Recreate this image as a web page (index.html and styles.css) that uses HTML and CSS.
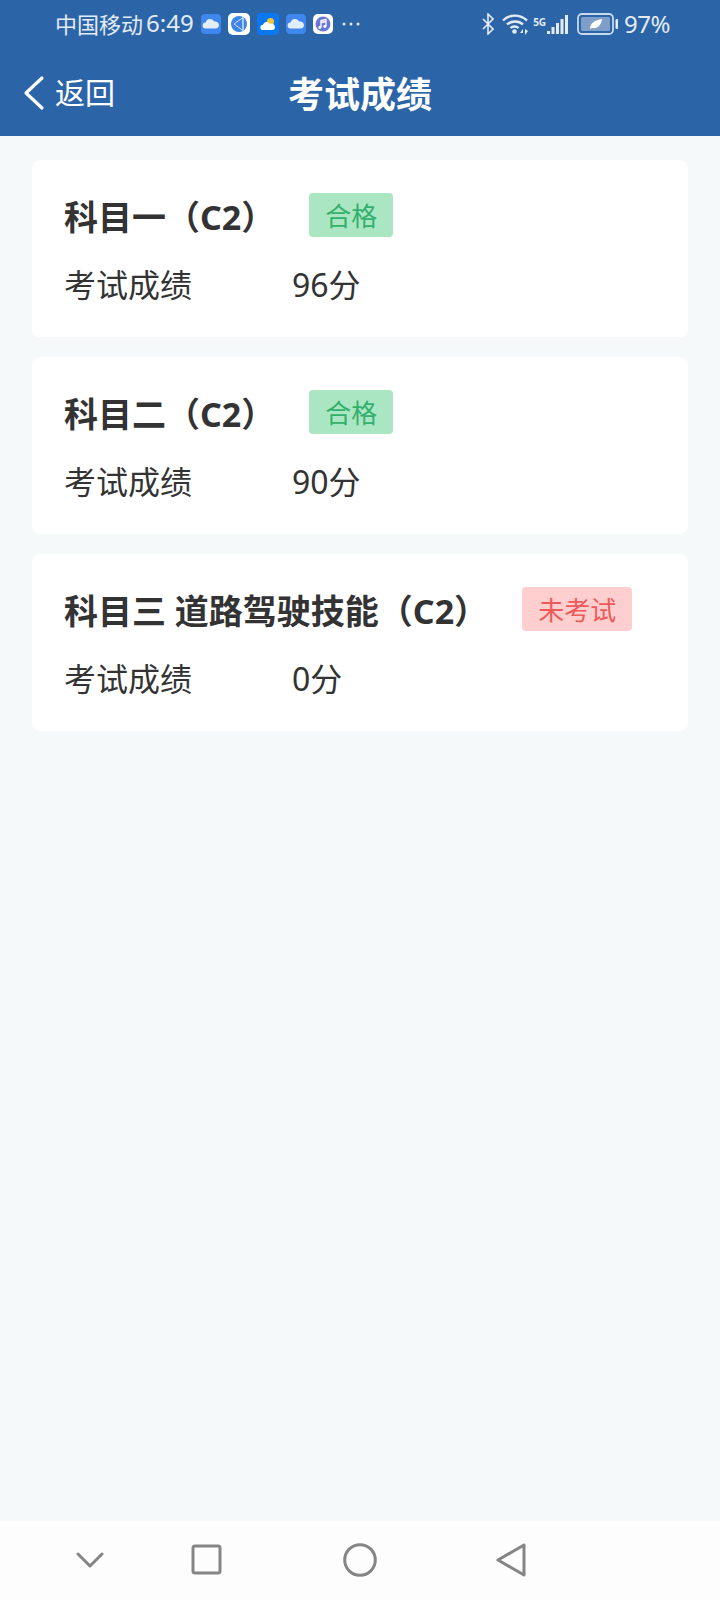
FILE: index.html
```html
<!DOCTYPE html>
<html lang="zh-CN">
<head>
  <meta charset="UTF-8">
  <meta name="viewport" content="width=device-width, initial-scale=1.0">
  <title>考试成绩</title>
  <link rel="stylesheet" href="styles.css">
</head>
<body>
  <div class="page">
    <header class="top">
      <div class="status">
        <span class="carrier">中国移动</span>
        <span class="clock">6:49</span>
        <div class="apps">
          <svg class="app" width="20" height="20" viewBox="0 0 20 20"><rect width="20" height="20" rx="4" fill="#3f86ee"/><path d="M4.500 14.500a3 3 0 0 1 .2-6 4.600 4.600 0 0 1 8.600-.9 3.500 3.500 0 0 1 2 6.900z" fill="#e4edfb"/></svg>
          <svg class="app" width="22" height="22" viewBox="0 0 22 22"><rect width="22" height="22" rx="5" fill="#fff"/><circle cx="11" cy="11" r="8" fill="#3d86e8"/><path d="M15 4.500 6 11l9 6.500zM15 4.500V17.500" fill="none" stroke="#cfe0f8" stroke-width="1"/></svg>
          <svg class="app" width="22" height="22" viewBox="0 0 22 22"><rect width="22" height="22" rx="4" fill="#0a78f0"/><circle cx="13.500" cy="8.500" r="3.500" fill="#f7c531"/><path d="M6 17a2.600 2.600 0 0 1 0-5.200 3.800 3.800 0 0 1 7-.8 3 3 0 0 1 3 6z" fill="#fff"/></svg>
          <svg class="app" width="20" height="20" viewBox="0 0 20 20"><rect width="20" height="20" rx="4" fill="#3f86ee"/><path d="M4.500 14.500a3 3 0 0 1 .2-6 4.600 4.600 0 0 1 8.600-.9 3.500 3.500 0 0 1 2 6.900z" fill="#e4edfb"/></svg>
          <svg class="app" width="20" height="20" viewBox="0 0 20 20"><rect width="20" height="20" rx="5" fill="#fff"/><circle cx="10" cy="10" r="7.500" fill="#6a78dc"/><path d="M8 13.500V6.500l5-1v7M8 8.500l5-1" fill="none" stroke="#fff" stroke-width="1.300"/><circle cx="6.800" cy="13.500" r="1.400" fill="#fff"/><circle cx="11.800" cy="12.500" r="1.400" fill="#fff"/></svg>
          <svg class="more" width="18" height="4" viewBox="0 0 18 4"><circle cx="2" cy="2" r="1.500"/><circle cx="9" cy="2" r="1.500"/><circle cx="16" cy="2" r="1.500"/></svg>
        </div>
        <div class="sys">
          <svg width="12" height="22" viewBox="0 0 12 22" fill="none" stroke="#e3ebf6" stroke-width="1.600"><path d="M1 6l10 10-5 5V1l5 5L1 16"/></svg>
          <svg class="wifi" width="27" height="22" viewBox="0 0 27 22" fill="none" stroke="#e3ebf6" stroke-width="2.400"><path d="M1 7.500c6.500-6.500 17-6.500 24 0M5 11.500c4-4 12-4 16 0M8.500 15c2-2 6-2 8 0"/><circle cx="12.500" cy="18.500" r="2.300" fill="#e3ebf6" stroke="none"/><path d="M21 16l-3 4h3zM23 16v6l3-4z" fill="#e3ebf6" stroke="none"/></svg>
          <span class="net">5G</span>
          <svg class="bars" width="21" height="21" viewBox="0 0 21 21" fill="#e3ebf6"><rect x="0" y="17" width="3" height="3"/><rect x="4.500" y="13" width="3" height="7"/><rect x="9" y="9" width="3" height="11"/><rect x="13.500" y="5" width="3" height="15"/><rect x="18" y="1" width="3" height="19"/></svg>
          <svg class="batt" width="41" height="22" viewBox="0 0 41 22"><rect x="1" y="1" width="35" height="20" rx="4" fill="none" stroke="#c9d8ec" stroke-width="1.800"/><rect x="4" y="4" width="29" height="14" rx="1.500" fill="#7f9fca"/><path d="M13 16c0-6 5-9 12-10-1 7-5 10-10 9z" fill="#fff"/><rect x="38.500" y="6" width="2.500" height="10" rx="1" fill="#e3ebf6"/></svg>
          <span class="pct">97%</span>
        </div>
      </div>
      <nav class="bar">
        <a class="back">
          <svg class="arrow" width="22" height="36" viewBox="0 0 22 36" fill="none" stroke="#fff" stroke-width="3.200" stroke-linecap="round" stroke-linejoin="round"><path d="M19 3 3 18l16 15"/></svg>
          <span>返回</span>
        </a>
        <h1>考试成绩</h1>
      </nav>
    </header>

    <main class="list">
      <section class="card">
        <div class="head">
          <h2>科目一（C2）</h2>
          <span class="tag ok">合格</span>
        </div>
        <div class="row"><span class="label">考试成绩</span><span>96分</span></div>
      </section>
      <section class="card">
        <div class="head">
          <h2>科目二（C2）</h2>
          <span class="tag ok">合格</span>
        </div>
        <div class="row"><span class="label">考试成绩</span><span>90分</span></div>
      </section>
      <section class="card">
        <div class="head">
          <h2>科目三 道路驾驶技能（C2）</h2>
          <span class="tag no">未考试</span>
        </div>
        <div class="row"><span class="label">考试成绩</span><span>0分</span></div>
      </section>
    </main>

    <footer class="keys">
      <svg class="k1" width="28" height="16" viewBox="0 0 28 16" fill="none" stroke="#858585" stroke-width="3" stroke-linecap="round" stroke-linejoin="round"><path d="M2 2l12 12L26 2"/></svg>
      <svg class="k2" width="32" height="32" viewBox="0 0 32 32" fill="none" stroke="#858585" stroke-width="3"><rect x="2" y="2" width="27" height="27" rx="2"/></svg>
      <svg class="k3" width="34" height="34" viewBox="0 0 34 34" fill="none" stroke="#858585" stroke-width="3"><circle cx="17" cy="17" r="15.300"/></svg>
      <svg class="k4" width="30" height="34" viewBox="0 0 30 34" fill="none" stroke="#858585" stroke-width="3" stroke-linejoin="round"><path d="M28 2v30L2 17z"/></svg>
    </footer>
  </div>
</body>
</html>
```

FILE: styles.css
```css
* {
  box-sizing: border-box;
}

body {
  margin: 0;
  font-family: 'Noto Sans', 'Noto Sans CJK SC', sans-serif;
  background-color: #f5f9fa;
  color: #333;
}

.page {
  height: 1600px;
  display: flex;
  flex-direction: column;
}

.top {
  height: 136px;
  background-color: #2c64a8;
  color: #fff;
}

.status {
  height: 48px;
  padding: 0 50px 0 55px;
  display: flex;
  align-items: center;
  color: #e3ebf6;
  font-size: 22px;
}

.carrier {
  margin-bottom: 3px;
}

.clock {
  margin: 0 0 3px 3px;
  font-size: 24px;
}

.apps {
  margin-left: 7px;
  display: flex;
  align-items: center;
}

.app {
  margin-right: 7px;
}

.more {
  margin-left: 2px;
  fill: #e3ebf6;
}

.sys {
  margin-left: auto;
  display: flex;
  align-items: center;
}

.wifi {
  margin-left: 8px;
}

.net {
  align-self: flex-start;
  margin: 9px 0 0 4px;
  font-size: 10px;
  font-weight: 700;
  line-height: 12px;
}

.bars {
  margin-left: 1px;
}

.batt {
  margin-left: 9px;
}

.pct {
  margin: 0 0 2px 6px;
  font-size: 24px;
  letter-spacing: -0.5px;
}

.bar {
  position: relative;
  height: 88px;
  display: flex;
  align-items: center;
  justify-content: center;
}

.back {
  position: absolute;
  left: 23px;
  top: 0;
  height: 86px;
  display: flex;
  align-items: center;
  gap: 10px;
  font-size: 30px;
}

.arrow {
  margin-top: 3px;
}

h1 {
  margin: 0;
  font-size: 36px;
  font-weight: 700;
}

.list {
  flex: 1;
  padding: 24px 32px;
  display: flex;
  flex-direction: column;
  gap: 20px;
}

.card {
  height: 177px;
  padding: 33px 32px 0;
  background-color: #fff;
  border-radius: 8px;
}

.head {
  height: 44px;
  display: flex;
  align-items: center;
}

h2 {
  margin: 0 34px 0 0;
  font-size: 34px;
  font-weight: 700;
}

.tag {
  height: 44px;
  padding: 0 16px;
  display: flex;
  align-items: center;
  border-radius: 4px;
  font-size: 26px;
}

.ok {
  background-color: #aae6c2;
  color: #33b06e;
}

.no {
  background-color: #ffcfcf;
  color: #ee5a5a;
}

.row {
  margin-top: 26px;
  display: flex;
  align-items: center;
  font-size: 32px;
  line-height: 44px;
}

.label {
  width: 228px;
}

.keys {
  height: 79px;
  padding-bottom: 2px;
  background-color: #fdfdfd;
  display: flex;
  align-items: center;
}

.k1 {
  margin-left: 76px;
}

.k2 {
  margin-left: 87px;
}

.k3 {
  margin-left: 120px;
}

.k4 {
  margin-left: 119px;
}
```
